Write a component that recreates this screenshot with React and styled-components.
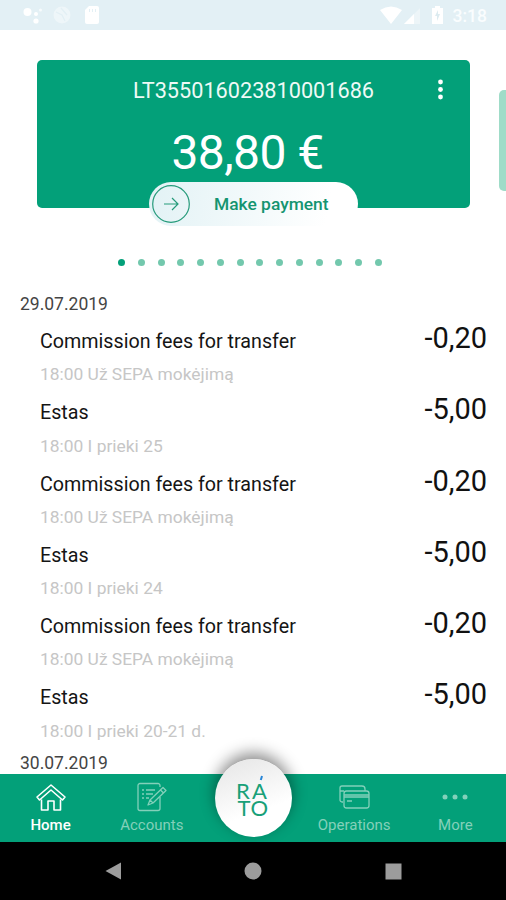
import styled, { createGlobalStyle } from "styled-components";

const GlobalStyle = createGlobalStyle`
  * {
    box-sizing: border-box;
  }
  body {
    margin: 0;
    background-color: #fff;
    font-family: Roboto, sans-serif;
  }
  button {
    font-family: inherit;
    border: none;
    padding: 0;
  }
`;

const Screen = styled.div`
  display: flex;
  flex-direction: column;
  width: 506px;
  height: 900px;
  overflow: hidden;
`;

const StatusBar = styled.header`
  display: flex;
  align-items: center;
  justify-content: space-between;
  background-color: #e3f0f5;
  height: 30px;
  flex-shrink: 0;
  padding: 0 19px 0 23px;
`;

const StatusIcons = styled.svg`
  display: block;
`;

const StatusRight = styled.div`
  display: flex;
  align-items: center;
  gap: 9px;
`;

const Clock = styled.span`
  color: #fafdfe;
  font-size: 17.5px;
  font-weight: 500;
  line-height: 30px;
  padding-top: 2px;
`;

const Cards = styled.section`
  display: flex;
  justify-content: space-between;
  padding: 30px 0 0 37px;
  height: 196px;
  flex-shrink: 0;
`;

const Card = styled.div`
  display: flex;
  flex-direction: column;
  align-items: center;
  background-color: #03a079;
  border-radius: 5px;
  color: #fff;
  width: 433px;
  height: 148px;
`;

const CardHeader = styled.div`
  display: grid;
  grid-template-columns: 60px 1fr 60px;
  align-items: center;
  justify-items: center;
  flex-shrink: 0;
  width: 100%;
  height: 60px;
`;

const Iban = styled.span`
  grid-column: 2;
  color: #eefaf6;
  font-size: 21.7px;
  line-height: 26px;
  padding-top: 2px;
  white-space: nowrap;
`;

const Balance = styled.div`
  flex-shrink: 0;
  font-size: 48px;
  letter-spacing: -0.6px;
  line-height: 58px;
  height: 61.5px;
  padding: 3.5px 12px 0 0;
  white-space: nowrap;
`;

const PaymentButton = styled.button`
  display: flex;
  align-items: center;
  background: linear-gradient(100deg, #e2f2f5, #fff 85%);
  border-radius: 22px;
  color: #149470;
  flex-shrink: 0;
  font-size: 17.4px;
  font-weight: 500;
  gap: 23px;
  height: 44px;
  padding-left: 2px;
  width: 209px;
`;

const NextCard = styled.div`
  background-color: #9fdcc8;
  border-radius: 5px 0 0 5px;
  margin-top: 30px;
  width: 7px;
  height: 101px;
`;

const Dots = styled.div`
  display: flex;
  justify-content: space-between;
  margin: 33px auto 0 118px;
  width: 264px;
  height: 7.5px;
  flex-shrink: 0;
`;

const Dot = styled.span`
  background-color: ${({ $active }) => ($active ? "#03a079" : "#73c8ad")};
  border-radius: 50%;
  width: 7px;
  height: 7px;
`;

const Transactions = styled.main`
  flex: 1;
  min-height: 0;
  overflow: hidden;
  padding: 25.5px 19px 0 20px;
`;

const DateTitle = styled.h4`
  color: #444;
  font-size: 17.5px;
  font-weight: 400;
  line-height: 24px;
  margin: 0;
`;

const Day = styled.section`
  padding-bottom: 7.5px;
`;

const Row = styled.div`
  display: flex;
  justify-content: space-between;
  height: 71.25px;
  padding-left: 20px;
`;

const Name = styled.p`
  color: #151515;
  font-size: 19.7px;
  line-height: 24px;
  margin: 14px 0 0;
`;

const Details = styled.p`
  color: #c6c6c6;
  font-size: 17.4px;
  line-height: 24px;
  margin: 8.3px 0 0;
`;

const Amount = styled.span`
  color: #111;
  font-size: 29px;
  line-height: 36px;
  padding-top: 4px;
`;

const TabBar = styled.nav`
  display: grid;
  grid-template-columns: repeat(5, 1fr);
  background-color: #03a079;
  height: 68px;
  flex-shrink: 0;
`;

const Tab = styled.div`
  display: flex;
  flex-direction: column;
  align-items: center;
  color: ${({ $active }) => ($active ? "#fff" : "#83d0ba")};
  font-size: 15px;
  font-weight: ${({ $active }) => ($active ? 500 : 400)};
  line-height: 20px;
  padding-top: 8px;
`;

const TabIcon = styled.svg`
  display: block;
  fill: none;
  stroke: currentColor;
  stroke-linejoin: round;
  margin-bottom: 1px;
`;

const LogoButton = styled.div`
  display: flex;
  justify-self: center;
  align-items: center;
  justify-content: center;
  background: linear-gradient(160deg, #e5e5e5, #fff 65%);
  border-radius: 50%;
  box-shadow: 0 -6px 15px rgba(0, 0, 0, 0.45);
  margin: -15px 0 0 1px;
  width: 77px;
  height: 78px;
`;

const LogoText = styled.text`
  fill: #18a078;
  font-family: Lato, sans-serif;
  font-size: 22px;
`;

const SystemBar = styled.footer`
  display: flex;
  align-items: center;
  background-color: #000;
  height: 58px;
  flex-shrink: 0;
`;

const transactions = [
  { name: "Commission fees for transfer", details: "18:00 Už SEPA mokėjimą", amount: "-0,20" },
  { name: "Estas", details: "18:00 I prieki 25", amount: "-5,00" },
  { name: "Commission fees for transfer", details: "18:00 Už SEPA mokėjimą", amount: "-0,20" },
  { name: "Estas", details: "18:00 I prieki 24", amount: "-5,00" },
  { name: "Commission fees for transfer", details: "18:00 Už SEPA mokėjimą", amount: "-0,20" },
  { name: "Estas", details: "18:00 I prieki 20-21 d.", amount: "-5,00" },
];

function Status() {
  return (
    <StatusBar>
      <StatusIcons width="78" height="30" fill="#fff">
        <circle cx="4.5" cy="12" r="4" />
        <circle cx="13" cy="14" r="2" />
        <circle cx="13" cy="21" r="2.6" />
        <circle cx="17.5" cy="10" r="1.5" opacity="0.7" />
        <g opacity="0.4">
          <circle cx="39" cy="15" r="8.5" />
          <path d="M33 12l6 3 3 6M38 8l6 7" stroke="#e3f0f5" strokeWidth="1.2" />
        </g>
        <path d="M66 6h8a2 2 0 0 1 2 2v14a2 2 0 0 1-2 2H64a2 2 0 0 1-2-2V10z" />
        <path d="M66.5 9v3M69.5 9v3M72.5 9v3" stroke="#e3f0f5" strokeWidth="1" />
      </StatusIcons>
      <StatusRight>
        <StatusIcons width="64" height="30" fill="#fff">
          <path d="M0 10Q11 3 22 10L11 24z" />
          <path d="M40 8v16H24z" opacity="0.35" />
          <path d="M34 14v10H24z" />
          <path d="M55 6h5v2h3v16H52V8h3z" />
          <path d="M58 10l-3 6h2v5l3-7h-2z" fill="#dcebf0" />
        </StatusIcons>
        <Clock>3:18</Clock>
      </StatusRight>
    </StatusBar>
  );
}

function AccountCard() {
  return (
    <Cards>
      <Card>
        <CardHeader>
          <Iban>LT355016023810001686</Iban>
          <svg width="8" height="24" fill="#fff">
            <circle cx="4.500" cy="4" r="2.4" />
            <circle cx="4.500" cy="11.500" r="2.4" />
            <circle cx="4.500" cy="19" r="2.4" />
          </svg>
        </CardHeader>
        <Balance>38,80 €</Balance>
        <PaymentButton>
          <svg width="40" height="40" fill="none" stroke="#269b7b">
            <circle cx="20" cy="20" r="18.3" strokeWidth="1.2" />
            <path d="M13 20h14M21 14l6 6-6 6" strokeWidth="1.2" />
          </svg>
          Make payment
        </PaymentButton>
      </Card>
      <NextCard />
    </Cards>
  );
}

function Navigation() {
  return (
    <TabBar>
      <Tab $active>
        <TabIcon width="32" height="32" strokeWidth="1.6">
          <path d="M2 15L16 3l14 12-2.500 3L16 8 4.500 18z" />
          <path d="M6.500 17.500V28H13v-9h6v9h6.500V17.500" />
        </TabIcon>
        Home
      </Tab>
      <Tab>
        <TabIcon width="32" height="32" strokeWidth="1.3">
          <path d="M24 5V3.500a2 2 0 0 0-2-2H4a2 2 0 0 0-2 2v23a2 2 0 0 0 2 2h18a2 2 0 0 0 2-2V15" />
          <path d="M6 8h2M10 8h9M6 12h2M10 12h7M6 16h2M10 16h3" />
          <path d="M12 23l2-5L27 5.500l3 3L17 21zM24.500 8l3 3M14 18l3 3" />
        </TabIcon>
        Accounts
      </Tab>
      <LogoButton>
        <svg width="40" height="48">
          <LogoText>
            <tspan x="3" y="24.500" textLength="31">RA</tspan>
            <tspan x="4.500" y="42" textLength="30.500">TO</tspan>
          </LogoText>
          <path d="M29 2l-1.200 4" stroke="#2685d7" strokeWidth="2" />
        </svg>
      </LogoButton>
      <Tab>
        <TabIcon width="32" height="32" strokeWidth="1.3">
          <path d="M5 20H4a2 2 0 0 1-2-2V6a2 2 0 0 1 2-2h20a3 3 0 0 1 3 3v2" />
          <rect x="6" y="9" width="25" height="17" rx="2.5" />
          <path d="M2 9h4M6 13h25M6 15h25M9 19h5" />
        </TabIcon>
        Operations
      </Tab>
      <Tab>
        <TabIcon width="32" height="32">
          <g fill="currentColor" stroke="none">
            <circle cx="6" cy="15" r="2.5" />
            <circle cx="16" cy="15" r="2.5" />
            <circle cx="26" cy="15" r="2.5" />
          </g>
        </TabIcon>
        More
      </Tab>
    </TabBar>
  );
}

function App() {
  return (
    <>
      <GlobalStyle />
      <Screen>
        <Status />
        <AccountCard />
        <Dots>
          {Array.from({ length: 14 }, (_, i) => (
            <Dot key={i} $active={i === 0} />
          ))}
        </Dots>
        <Transactions>
          <Day>
            <DateTitle>29.07.2019</DateTitle>
            {transactions.map(({ name, details, amount }, i) => (
              <Row key={i}>
                <div>
                  <Name>{name}</Name>
                  <Details>{details}</Details>
                </div>
                <Amount>{amount}</Amount>
              </Row>
            ))}
          </Day>
          <DateTitle>30.07.2019</DateTitle>
        </Transactions>
        <Navigation />
        <SystemBar>
          <svg width="506" height="58" fill="#9c9c9c">
            <path d="M105.500 29l15.500-8.500v17z" />
            <circle cx="253" cy="29" r="8.500" />
            <rect x="385.500" y="21.500" width="16" height="16" />
          </svg>
        </SystemBar>
      </Screen>
    </>
  );
}

export default App;
